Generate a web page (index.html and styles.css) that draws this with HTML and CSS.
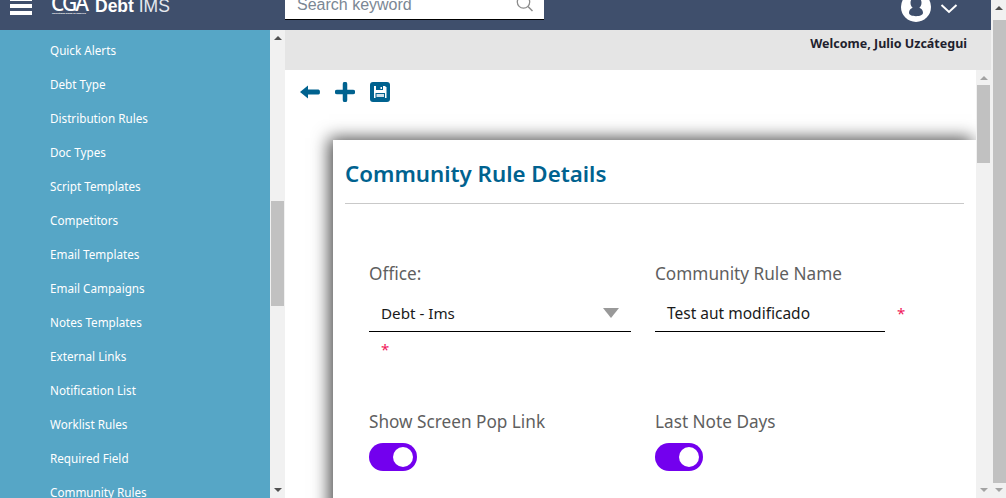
FILE: index.html
```html
<!DOCTYPE html>
<html lang="en">
<head>
    <meta charset="UTF-8">
    <title>Debt IMS</title>
    <link rel="stylesheet" href="styles.css">
</head>
<body>
    <div class="app">
        <div class="page">
            <header class="topbar">
                <div class="burger"><span></span><span></span><span></span></div>
                <div class="logo">
                    <span class="logo-mark">CGA</span>
                    <span class="logo-sub">collections group of america</span>
                </div>
                <div class="brand"><b>Debt</b> IMS</div>
                <div class="search">
                    <span class="search-text">Search keyword</span>
                    <svg class="search-icon" width="18" height="18" viewBox="0 0 18 18">
                        <circle cx="7.5" cy="6" r="6.2" fill="none" stroke="#8c8c8c" stroke-width="1.3"/>
                        <path d="M12 10.5l4.5 4.5" stroke="#8c8c8c" stroke-width="1.5" fill="none"/>
                    </svg>
                </div>
                <div class="user">
                    <svg width="30" height="22" viewBox="0 0 30 22">
                        <circle cx="15" cy="7" r="15" fill="#fff"/>
                        <path d="M15 -3c3.600 0 5.500 2.800 5.500 5.800 0 2.400-1 4-2.200 5 2 .8 3.700 2.300 3.700 5 0 2.300-3 3.400-7 3.400s-7-1.100-7-3.400c0-2.700 1.700-4.200 3.700-5-1.200-1-2.200-2.600-2.200-5 0-3 1.900-5.800 5.500-5.800z" fill="#3f4f6c"/>
                    </svg>
                    <svg class="chevron" width="18" height="10" viewBox="0 0 18 10">
                        <path d="M1.500 1l7.500 7 7.500-7" fill="none" stroke="#fff" stroke-width="2"/>
                    </svg>
                </div>
            </header>

            <div class="body">
                <nav class="sidebar">
                    <a>Quick Alerts</a>
                    <a>Debt Type</a>
                    <a>Distribution Rules</a>
                    <a>Doc Types</a>
                    <a>Script Templates</a>
                    <a>Competitors</a>
                    <a>Email Templates</a>
                    <a>Email Campaigns</a>
                    <a>Notes Templates</a>
                    <a>External Links</a>
                    <a>Notification List</a>
                    <a>Worklist Rules</a>
                    <a>Required Field</a>
                    <a>Community Rules</a>
                </nav>

                <div class="scroll scroll-side">
                    <span class="arrow up"></span>
                    <div class="track"><span class="thumb"></span></div>
                    <span class="arrow down"></span>
                </div>

                <main class="main">
                    <div class="welcome">Welcome, Julio Uzcátegui</div>
                    <div class="content-wrap">
                        <div class="content">
                            <div class="toolbar">
                                <svg width="20" height="14" viewBox="0 0 20 14">
                                    <path d="M0 7L8 0.500V4.500H18.500Q20 4.500 20 7T18.500 9.500H8V13.500z" fill="#00628f"/>
                                </svg>
                                <svg width="20" height="20" viewBox="0 0 20 20">
                                    <path d="M10 2v16M2 10h16" stroke="#00628f" stroke-width="4.500" stroke-linecap="round" fill="none"/>
                                </svg>
                                <svg width="20" height="20" viewBox="0 0 20 20">
                                    <rect width="20" height="20" rx="3" fill="#00628f"/>
                                    <path d="M4 4h11l1.500 1.500V16H4z" fill="#fff"/>
                                    <path d="M6 4h7v4H6z" fill="#00628f"/>
                                    <path d="M10.500 5h1.500v2h-1.500z" fill="#fff"/>
                                    <path d="M5.500 11h9.500v5H5.500z" fill="#00628f"/>
                                    <path d="M6.500 12h7.500v3H6.500z" fill="#cfe0ea"/>
                                </svg>
                            </div>

                            <section class="card">
                                <h2>Community Rule Details</h2>
                                <div class="form-grid">
                                    <div class="field">
                                        <label>Office:</label>
                                        <div class="select-box">
                                            <span>Debt - Ims</span>
                                            <i class="caret"></i>
                                        </div>
                                        <span class="req req-under">*</span>
                                    </div>
                                    <div class="field">
                                        <label>Community Rule Name</label>
                                        <div class="input-row">
                                            <div class="input-box">Test aut modificado</div>
                                            <span class="req">*</span>
                                        </div>
                                    </div>
                                    <div class="field">
                                        <label>Show Screen Pop Link</label>
                                        <div class="toggle"><span></span></div>
                                    </div>
                                    <div class="field">
                                        <label>Last Note Days</label>
                                        <div class="toggle"><span></span></div>
                                    </div>
                                </div>
                            </section>
                        </div>

                        <div class="scroll scroll-inner">
                            <span class="arrow up light"></span>
                            <div class="track"><span class="thumb"></span></div>
                            <span class="arrow down light"></span>
                        </div>
                    </div>
                </main>
            </div>
        </div>

        <div class="scroll scroll-outer">
            <span class="arrow up"></span>
            <div class="track"><span class="thumb"></span></div>
            <span class="arrow down light"></span>
        </div>
    </div>
</body>
</html>
```

FILE: styles.css
```css
* {
    box-sizing: border-box;
}

html, body {
    margin: 0;
    padding: 0;
    height: 498px;
    overflow: hidden;
}

body {
    background: #fff;
    font-family: "Noto Sans", sans-serif;
    color: #333;
}

.app {
    display: flex;
    width: 1006px;
    height: 498px;
}

.page {
    width: 991px;
    display: flex;
    flex-direction: column;
}

/* top bar, scrolled a little so things are cut at the top */
.topbar {
    height: 30px;
    background: #3f4f6c;
    display: flex;
    align-items: flex-start;
    overflow: hidden;
    flex-shrink: 0;
}

.burger {
    width: 22px;
    margin: -3px 0 0 10px;
    display: flex;
    flex-direction: column;
    gap: 3.5px;
}

.burger span {
    height: 3.5px;
    background: #fff;
}

.logo {
    width: 36px;
    margin: -6px 0 0 19px;
    color: #fff;
    display: flex;
    flex-direction: column;
    align-items: center;
}

.logo-mark {
    font-size: 21px;
    line-height: 18px;
    font-weight: 500;
    letter-spacing: -2px;
}

.logo-sub {
    font-size: 2.4px;
    line-height: 3px;
    font-weight: 700;
    white-space: nowrap;
}

.brand {
    margin: -4px 0 0 8px;
    width: 190px;
    font-family: "Liberation Sans", sans-serif;
    font-size: 17.5px;
    line-height: 20px;
    color: #e6e9ef;
}

.brand b {
    color: #fff;
}

.search {
    width: 259px;
    height: 20px;
    background: #fff;
    border-bottom: 1px solid #000;
    display: flex;
    justify-content: space-between;
    padding: 0 10px 0 12px;
}

.search-text {
    font-family: "Liberation Sans", sans-serif;
    font-size: 16px;
    line-height: 10px;
    color: #7b8794;
}

.search-icon {
    margin-top: -4px;
}

.user {
    margin-left: 357px;
    display: flex;
    align-items: flex-start;
    gap: 9px;
}

.chevron {
    margin-top: 4px;
}

/* below the bar */
.body {
    flex: 1;
    display: flex;
    min-height: 0;
}

.sidebar {
    width: 270px;
    background: #56a6c6;
    display: flex;
    flex-direction: column;
    gap: 16px;
    padding: 11px 0 0 50px;
    overflow: hidden;
    flex-shrink: 0;
}

.sidebar a {
    color: #fff;
    font-size: 11.7px;
    line-height: 18px;
    flex-shrink: 0;
}

/* scrollbars */
.scroll {
    width: 15px;
    background: #f1f1f1;
    display: flex;
    flex-direction: column;
    align-items: center;
    flex-shrink: 0;
}

.track {
    flex: 1;
    width: 100%;
    display: flex;
    flex-direction: column;
}

.thumb {
    display: block;
    background: #c1c1c1;
    margin: 0 1px;
}

.arrow {
    width: 0;
    height: 0;
    border-left: 4px solid transparent;
    border-right: 4px solid transparent;
    flex-shrink: 0;
}

.arrow.up {
    border-bottom: 4px solid #505050;
    margin: 6px 0 5px;
}

.arrow.down {
    border-top: 4px solid #505050;
    margin: 5px 0 6px;
}

.arrow.up.light {
    border-bottom-color: #a3a3a3;
}

.arrow.down.light {
    border-top-color: #a3a3a3;
}

.scroll-side .thumb {
    height: 105px;
    margin-top: 156px;
}

.scroll-outer .thumb {
    flex: 1;
    margin: 0 0 0 2px;
}

.scroll-outer .arrow.up {
    margin: 6px 0 10px 0;
}

.scroll-inner .thumb {
    height: 78px;
}

/* main column */
.main {
    flex: 1;
    min-width: 0;
    display: flex;
    flex-direction: column;
}

.welcome {
    height: 40px;
    background: #e5e5e5;
    flex-shrink: 0;
    text-align: right;
    padding: 5px 24px 0 0;
    font-size: 12.5px;
    line-height: 18px;
    font-weight: 700;
    color: #1f1f2e;
}

.content-wrap {
    flex: 1;
    min-height: 0;
    display: flex;
}

.content {
    flex: 1;
    min-width: 0;
    overflow: hidden;
}

.toolbar {
    height: 70px;
    padding: 12px 0 0 15px;
    display: flex;
    align-items: flex-start;
    gap: 15px;
}

.toolbar svg:first-child {
    margin-top: 3px;
}

.card {
    margin-left: 48px;
    height: 400px;
    background: #fff;
    box-shadow: -4px -2px 16px rgba(0, 0, 0, 0.7);
    padding: 18px 12px 0;
}

.card h2 {
    margin: 0;
    height: 46px;
    border-bottom: 1px solid #c9c9c9;
    color: #00628f;
    font-size: 22.3px;
    line-height: 32px;
    font-weight: 600;
}

.form-grid {
    display: grid;
    grid-template-columns: 262px 1fr;
    column-gap: 24px;
    padding: 58px 0 0 24px;
}

.field {
    height: 148px;
}

.field label {
    display: block;
    font-size: 17.2px;
    line-height: 24px;
    color: #5f5f5f;
}

.select-box {
    margin-top: 9px;
    height: 37px;
    border-bottom: 1px solid #000;
    display: flex;
    justify-content: space-between;
    align-items: center;
    padding: 0 12px 0 12px;
    font-size: 15.2px;
    color: #1a1a1a;
}

.caret {
    width: 0;
    height: 0;
    border-left: 8px solid transparent;
    border-right: 8px solid transparent;
    border-top: 10px solid #999;
}

.input-row {
    margin-top: 9px;
    display: flex;
    gap: 12px;
}

.input-box {
    width: 230px;
    height: 37px;
    border-bottom: 1px solid #000;
    padding: 0 12px;
    font-size: 15.5px;
    line-height: 36px;
    color: #1a1a1a;
}

.req {
    color: #f0185a;
    font-size: 15px;
    line-height: 36px;
}

.req-under {
    display: block;
    margin-left: 12px;
    line-height: 34px;
}

.toggle {
    margin-top: 9px;
    width: 48px;
    height: 28px;
    border-radius: 14px;
    background: #7300ee;
    display: flex;
    justify-content: flex-end;
    align-items: center;
    padding-right: 4px;
}

.toggle span {
    width: 20px;
    height: 20px;
    border-radius: 50%;
    background: #fff;
}
```
